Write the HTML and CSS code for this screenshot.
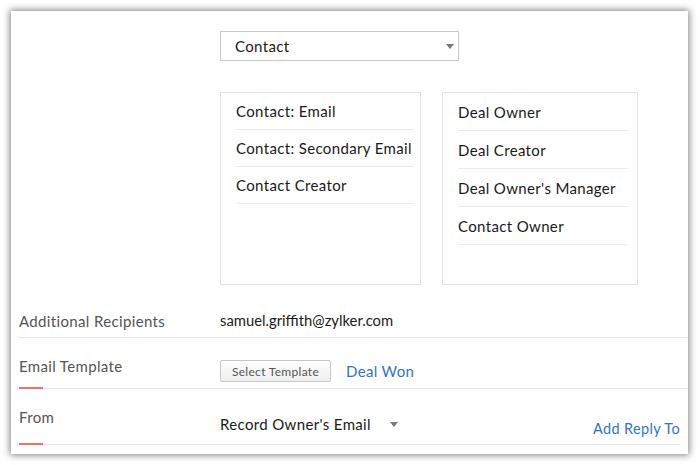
FILE: index.html
```html
<!DOCTYPE html>
<html>
<head>
<meta charset="utf-8">
<link rel="stylesheet" href="styles.css">
</head>
<body>
<div class="card">
  <div class="top">
    <div class="select">
      <span>Contact</span>
      <span class="caret"></span>
    </div>
    <div class="lists">
      <ul class="list list-left">
        <li>Contact: Email</li>
        <li>Contact: Secondary Email</li>
        <li>Contact Creator</li>
      </ul>
      <ul class="list list-right">
        <li>Deal Owner</li>
        <li>Deal Creator</li>
        <li>Deal Owner's Manager</li>
        <li>Contact Owner</li>
      </ul>
    </div>
  </div>
  <div class="row row-recip">
    <div class="label"><span>Additional Recipients</span></div>
    <div class="value email">samuel.griffith@zylker.com</div>
  </div>
  <div class="row row-template">
    <div class="label"><span>Email Template</span><i class="bar"></i></div>
    <div class="value">
      <button class="btn">Select Template</button>
      <a class="link">Deal Won</a>
    </div>
  </div>
  <div class="row row-from">
    <div class="label"><span>From</span><i class="bar"></i></div>
    <div class="value from-value">
      <span class="owner">Record Owner's Email <span class="caret"></span></span>
      <a class="link reply">Add Reply To</a>
    </div>
  </div>
</div>
</body>
</html>
```

FILE: styles.css
```css
html, body {
  margin: 0;
  padding: 0;
  background: #fff;
}
body {
  font-family: "Lato", "Open Sans", sans-serif;
  color: #1a1a1a;
  letter-spacing: 0.35px;
  width: 700px;
  height: 465px;
  overflow: hidden;
}
.card {
  margin: 11px 0 0 11px;
  width: 677px;
  height: 443px;
  background: #fff;
  box-shadow: 0 0 7px 1px rgba(0, 0, 0, 0.5);
  box-sizing: border-box;
  overflow: hidden;
}
.top {
  padding: 20px 0 0 209px;
}
.select {
  width: 239px;
  height: 30px;
  box-sizing: border-box;
  border: 1px solid #c9c9c9;
  display: flex;
  align-items: center;
  justify-content: space-between;
  padding: 0 4px 0 14px;
  font-size: 15px;
}
.caret {
  display: inline-block;
  width: 0;
  height: 0;
  border-left: 4px solid transparent;
  border-right: 4px solid transparent;
  border-top: 5px solid #7a7a7a;
}
.lists {
  display: flex;
  gap: 21px;
  margin-top: 31px;
}
.list {
  list-style: none;
  margin: 0;
  box-sizing: border-box;
  border: 1px solid #e4e4e4;
  height: 193px;
  font-size: 15px;
}
.list li {
  border-bottom: 1px solid #ebebeb;
  display: flex;
  align-items: center;
  white-space: nowrap;
}
.list-left {
  width: 201px;
  padding: 0 6px 0 15px;
}
.list-left li {
  height: 36px;
}
.list-right {
  width: 196px;
  padding: 0 9px 0 15px;
}
.list-right li {
  height: 37px;
}
.row {
  margin-left: 8px;
  display: flex;
  border-bottom: 1px solid #e6e6e6;
}
.label {
  width: 201px;
  flex: none;
  display: flex;
  flex-direction: column;
  justify-content: space-between;
  color: #555;
  font-size: 15px;
}
.label span {
  line-height: 20px;
}
.bar {
  display: block;
  width: 24px;
  height: 2px;
  background: #ee7272;
  margin-bottom: -1px;
}
.value {
  flex: 1;
  font-size: 15px;
  display: flex;
  align-items: flex-start;
}
.email {
  letter-spacing: 0;
  font-size: 14.8px;
}
.row-recip {
  height: 52px;
}
.row-recip .label span {
  padding-top: 26px;
}
.row-recip .value {
  padding-top: 25px;
  line-height: 20px;
}
.row-template {
  height: 50px;
}
.row-template .label span {
  padding-top: 18px;
}
.row-template .value {
  padding-top: 16px;
  align-items: center;
}
.btn {
  font-family: inherit;
  font-size: 12px;
  letter-spacing: 0.3px;
  color: #555;
  height: 22px;
  width: 111px;
  padding: 0;
  border: 1px solid #c8c8c8;
  border-radius: 2px;
  background: linear-gradient(#fdfdfd, #efefef);
  margin-right: 15px;
}
.link {
  color: #3173d4;
  font-size: 15px;
}
.row-from {
  height: 55px;
  margin-right: 8px;
}
.row-from .label span {
  padding-top: 18px;
}
.from-value {
  justify-content: space-between;
  padding-top: 25px;
}
.owner {
  line-height: 20px;
  display: flex;
  align-items: center;
  gap: 19px;
}
.reply {
  font-size: 14.5px;
  padding-top: 5px;
  line-height: 20px;
}
```
